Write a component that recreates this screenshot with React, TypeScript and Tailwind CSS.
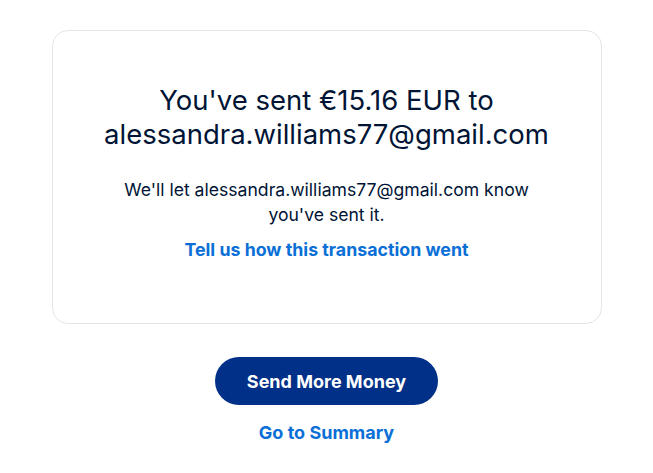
export default function App() {
  return (
    <div className="min-h-[473px] w-full bg-white flex flex-col items-center pt-[30px]" style={{ fontFamily: 'Inter, "Noto Sans", sans-serif' }}>
      <div className="w-[550px] h-[294px] border border-[#e3e5e8] rounded-[16px] flex flex-col items-center pt-[52px] text-center">
        <h1 className="text-[27.5px] leading-[34px] text-[#001435] font-normal w-[490px]">
          You've sent €15.16 EUR to alessandra.williams77@gmail.com
        </h1>
        <p className="mt-[26px] text-[17.6px] leading-[25px] text-[#001435] w-[440px]">
          We'll let alessandra.williams77@gmail.com know you've sent it.
        </p>
        <a href="#" className="mt-[11px] text-[17.8px] leading-[24px] font-bold text-[#0a6fd6]">
          Tell us how this transaction went
        </a>
      </div>
      <button className="mt-[33px] w-[223px] h-[48px] rounded-full bg-[#003087] text-white text-[18px] font-bold">
        Send More Money
      </button>
      <a href="#" className="mt-[16px] text-[18px] leading-[24px] font-bold text-[#0a6fd6]">
        Go to Summary
      </a>
    </div>
  );
}
